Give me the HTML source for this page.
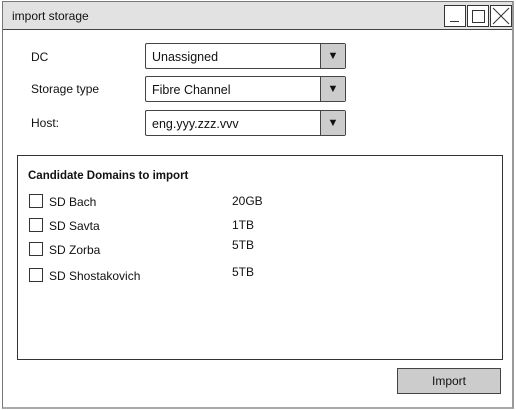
<!DOCTYPE html>
<html><head><style>
body{margin:0;width:516px;height:410px;background:#fff;position:relative;overflow:hidden;font-family:"Liberation Sans",sans-serif;font-size:12px;color:#111}
.a{position:absolute}
.win{left:2px;top:1px;width:509px;height:405px;border:1px solid #777;border-right:2px solid #999;border-bottom:2px solid #aaa}
.title{left:3px;top:2px;width:509px;height:27px;background:#e2e2e2;border-bottom:1px solid #444}
.wb{top:5px;width:20px;height:20px;border:1px solid #333;background:#fff}
.dd{left:145px;width:199px;height:24px;border:1px solid #444;border-radius:2px;background:#fff}
.dd span{position:absolute;left:6px;top:6px;font-size:12.5px}
.dd i{position:absolute;right:0;top:0;width:24px;height:24px;background:#ccc;border-left:1px solid #444;font-style:normal;text-align:center;line-height:24px;font-size:11px}
.cb{left:29px;width:12px;height:12px;border:1px solid #333}
</style></head><body>
<div class="a win"></div>
<div class="a title"></div>
<div class="a" style="left:12px;top:9px;font-size:12px">import storage</div>
<div class="a wb" style="left:444px"><div class="a" style="left:5px;top:15px;width:9px;height:1px;background:#333"></div></div>
<div class="a wb" style="left:467px"><div class="a" style="left:4px;top:4px;width:11px;height:11px;border:1px solid #333"></div></div>
<div class="a wb" style="left:490px"><svg width="20" height="20" style="position:absolute;left:0;top:0"><path d="M2 2L18 18M18 2L2 18" stroke="#333" stroke-width="1"/></svg></div>
<div class="a" style="left:31px;top:50px">DC</div>
<div class="a" style="left:31px;top:82px">Storage type</div>
<div class="a" style="left:31px;top:116px">Host:</div>
<div class="a dd" style="top:43px"><span>Unassigned</span><i>▼</i></div>
<div class="a dd" style="top:76px"><span>Fibre Channel</span><i>▼</i></div>
<div class="a dd" style="top:110px"><span>eng.yyy.zzz.vvv</span><i>▼</i></div>
<div class="a" style="left:17px;top:155px;width:484px;height:203px;border:1px solid #333"></div>
<div class="a" style="left:28px;top:170px;font-weight:bold;font-size:11.5px">Candidate Domains to import</div>
<div class="a cb" style="top:194px"></div><div class="a" style="left:49px;top:195px">SD Bach</div><div class="a" style="left:232px;top:194px">20GB</div>
<div class="a cb" style="top:218px"></div><div class="a" style="left:49px;top:219px">SD Savta</div><div class="a" style="left:232px;top:218px">1TB</div>
<div class="a cb" style="top:242px"></div><div class="a" style="left:49px;top:243px">SD Zorba</div><div class="a" style="left:232px;top:238px">5TB</div>
<div class="a cb" style="top:268px"></div><div class="a" style="left:49px;top:269px">SD Shostakovich</div><div class="a" style="left:232px;top:265px">5TB</div>
<div class="a" style="left:397px;top:368px;width:102px;height:24px;background:#ccc;border:1px solid #444;text-align:center;line-height:24px">Import</div>
</body></html>
